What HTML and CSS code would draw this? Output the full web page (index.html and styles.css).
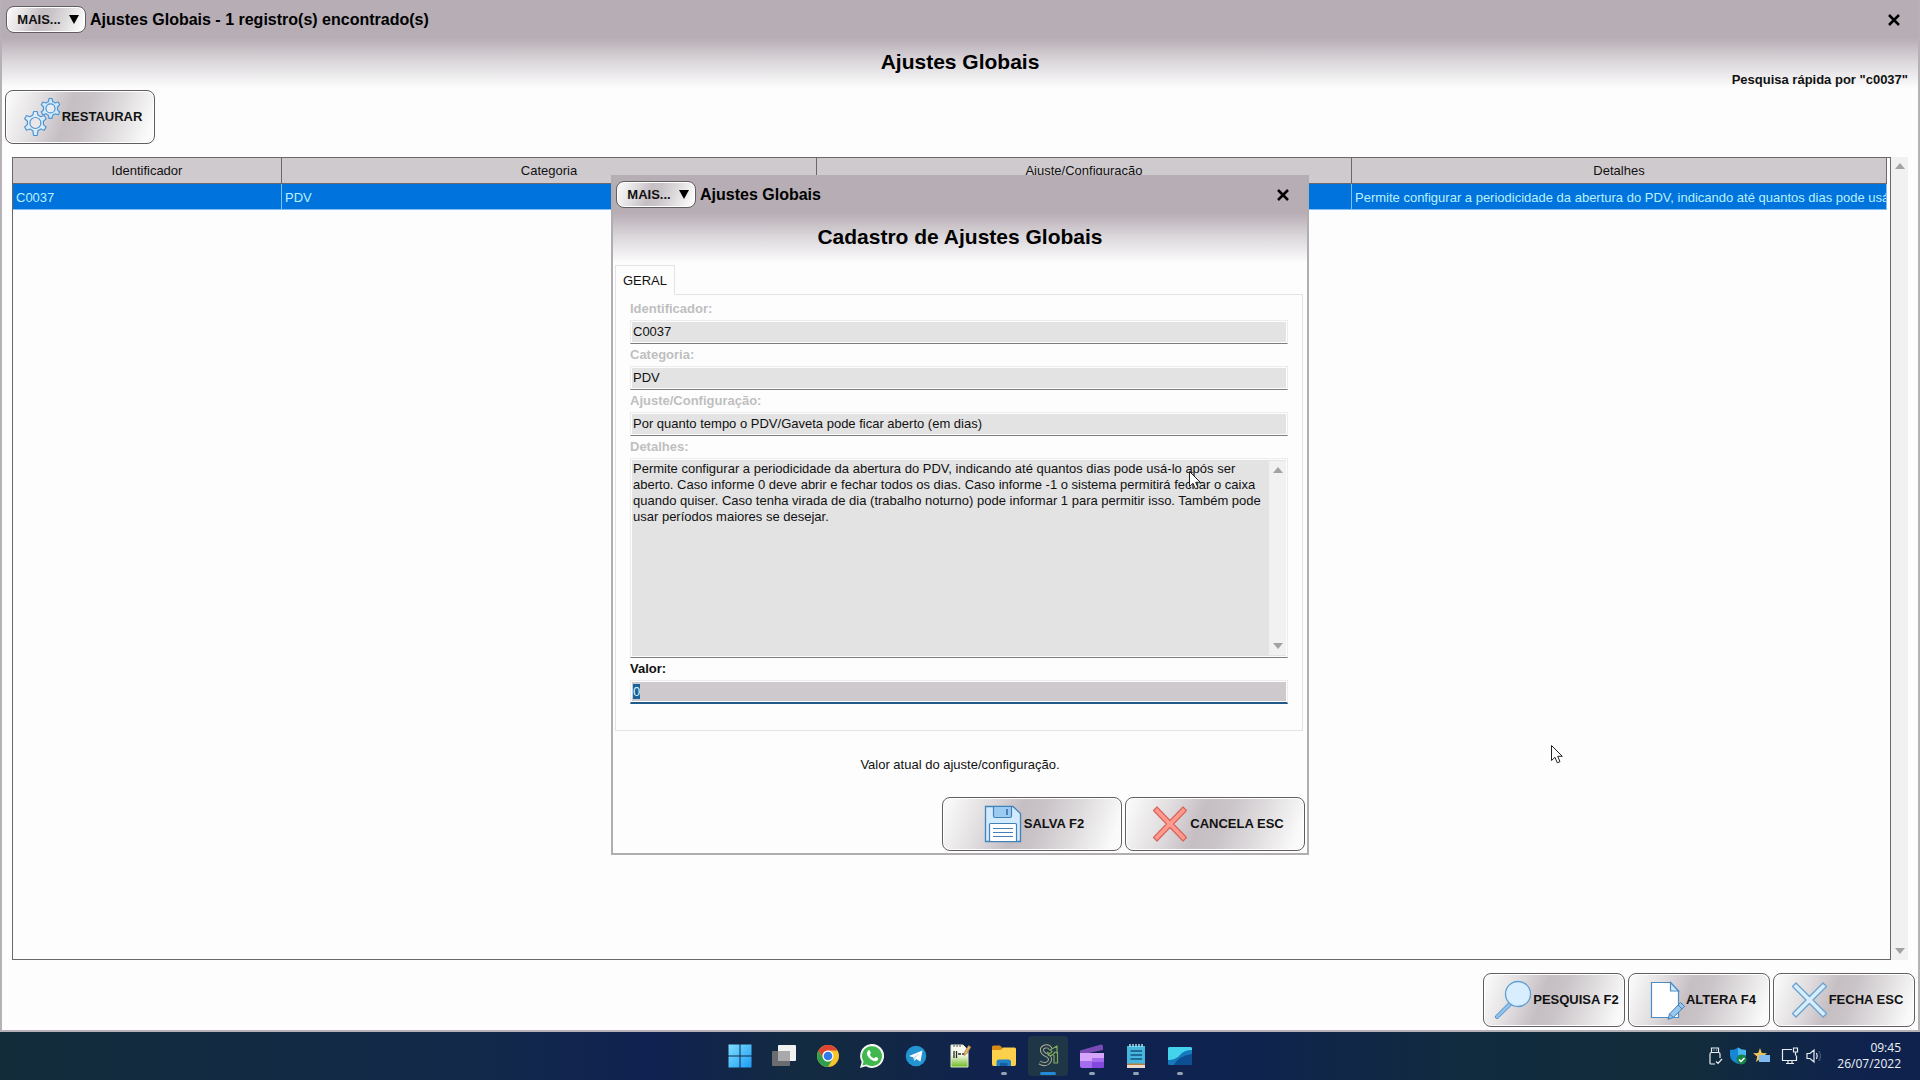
FILE: index.html
```html
<!DOCTYPE html>
<html lang="pt-BR">
<head>
  <meta charset="UTF-8">
  <meta name="viewport" content="width=device-width, initial-scale=1.0">
  <title>Ajustes Globais</title>
  <link rel="stylesheet" href="styles.css">
</head>
<body>
  <main class="window">
    <header class="titlebar">
      <button class="btn btn-menu" type="button">MAIS... <span class="caret"></span></button>
      <span class="caption">Ajustes Globais - 1 registro(s) encontrado(s)</span>
      <button class="close" type="button" aria-label="Fechar">
        <svg width="12" height="12" viewBox="0 0 12 12"><path d="M1 1L11 11M11 1L1 11"/></svg>
      </button>
    </header>
    <div class="heading">
      <h1>Ajustes Globais</h1>
      <p class="search-info">Pesquisa rápida por "c0037"</p>
    </div>

    <div class="toolbar">
      <button class="btn btn-restore" type="button">
        <svg class="icon" viewBox="0 0 40 40">
          <g fill="#cfe8fb" stroke="#4f94d0" stroke-width="1.2" stroke-linejoin="round">
            <path d="M26.500 4.500L27 1.500H30L30.700 4.500L33.200 6L36.200 5L37.700 7.700L35.500 10V12.800L37.700 15L36.200 17.700L33.200 16.800L30.700 18.300L30 21.300H27L26.300 18.300L23.800 16.800L20.800 17.700L19.300 15L21.500 12.800V10L19.300 7.700L20.800 5L23.800 6Z"/>
            <circle cx="28.500" cy="11.400" r="4.500" fill="#e6ecf2"/>
            <path d="M10.900 18L11.600 14.500H15.200L15.900 18L18.900 19.700L22.300 18.500L24.100 21.700L21.400 24.200V27.600L24.100 30L22.300 33.200L18.900 32L15.900 33.800L15.200 38.500H11.600L10.900 33.800L7.900 32L4.500 33.200L2.700 30L5.400 27.600V24.200L2.700 21.700L4.500 18.500L7.900 19.700Z" fill="#dcecf8"/>
            <circle cx="13.400" cy="26" r="5.500" fill="#e9e7ea"/>
          </g>
        </svg>
        RESTAURAR
      </button>
    </div>

    <div class="list">
      <div class="list-body">
        <table>
          <colgroup><col class="col-id"><col><col><col></colgroup>
          <thead>
            <tr><th>Identificador</th><th>Categoria</th><th>Ajuste/Configuração</th><th>Detalhes</th></tr>
          </thead>
          <tbody>
            <tr>
              <td>C0037</td>
              <td>PDV</td>
              <td>Por quanto tempo o PDV/Gaveta pode ficar aberto (em dias)</td>
              <td>Permite configurar a periodicidade da abertura do PDV, indicando até quantos dias pode usá-lo após ser aberto.</td>
            </tr>
          </tbody>
        </table>
      </div>
      <div class="scrollbar"><span class="arrow up"></span><span class="arrow down"></span></div>
    </div>

    <footer class="actions">
      <button class="btn" type="button">
        <svg class="icon" viewBox="0 0 40 40">
          <path d="M16.500 22L3 35.500Q1.500 37.500 3 38.300Q4.300 39 5.600 37.700L19 24.500Z" fill="#8fc3ee" stroke="#4c8cc4"/>
          <circle cx="25" cy="14" r="12.500" fill="#d8edfd" stroke="#5d9fd2" stroke-width="1.300"/>
        </svg>
        PESQUISA F2
      </button>
      <button class="btn" type="button">
        <svg class="icon" viewBox="0 0 40 40">
          <path d="M5.500 2.500H24.500L32.500 11V37.500H5.500Z" fill="#fff" stroke="#4c8cc4" stroke-width="1.200"/>
          <path d="M24.500 2.500V11H32.500Z" fill="#cfe8fb" stroke="#4c8cc4" stroke-width="1.200"/>
          <path d="M22 39.300L23.500 34L34.500 22.500L38.500 26.300L27.300 37.500Z" fill="#98c8ef" stroke="#3f7fb8"/>
          <path d="M23.500 34L27.300 37.500M32 25L36 28.800" stroke="#3f7fb8"/>
        </svg>
        ALTERA F4
      </button>
      <button class="btn" type="button">
        <svg class="icon" viewBox="0 0 40 40">
          <path d="M3.500 6.500L7 3L20.500 16.500L34 3L37.500 6.500L24 20L37.500 33.500L34 37L20.500 23.500L7 37L3.500 33.500L17 20Z" fill="#d8edfd" stroke="#6aa2cf" stroke-width="1.400" stroke-linejoin="round"/>
        </svg>
        FECHA ESC
      </button>
    </footer>

    <div class="overlay">
      <section class="dialog" role="dialog" aria-labelledby="dialog-title">
        <header class="titlebar">
          <button class="btn btn-menu" type="button">MAIS... <span class="caret"></span></button>
          <span class="caption">Ajustes Globais</span>
          <button class="close" type="button" aria-label="Fechar">
            <svg width="12" height="12" viewBox="0 0 12 12"><path d="M1 1L11 11M11 1L1 11"/></svg>
          </button>
        </header>
        <div class="heading">
          <h2 id="dialog-title">Cadastro de Ajustes Globais</h2>
        </div>

        <button class="tab" type="button">GERAL</button>
        <form class="panel" id="form">
          <label for="identificador">Identificador:</label>
          <input id="identificador" type="text" value="C0037" readonly>
          <label for="categoria">Categoria:</label>
          <input id="categoria" type="text" value="PDV" readonly>
          <label for="ajuste">Ajuste/Configuração:</label>
          <input id="ajuste" type="text" value="Por quanto tempo o PDV/Gaveta pode ficar aberto (em dias)" readonly>
          <label for="detalhes">Detalhes:</label>
          <div class="memo">
            <textarea id="detalhes" readonly>Permite configurar a periodicidade da abertura do PDV, indicando até quantos dias pode usá-lo após ser
aberto. Caso informe 0 deve abrir e fechar todos os dias. Caso informe -1 o sistema permitirá fechar o caixa
quando quiser. Caso tenha virada de dia (trabalho noturno) pode informar 1 para permitir isso. Também pode
usar períodos maiores se desejar.</textarea>
            <div class="scrollbar"><span class="arrow up"></span><span class="arrow down"></span></div>
          </div>
          <label class="active" for="valor">Valor:</label>
          <input class="active" id="valor" type="text" value="0">
        </form>
        <p class="hint">Valor atual do ajuste/configuração.</p>

        <div class="dialog-actions">
          <button class="btn" type="submit" form="form">
            <svg class="icon" viewBox="0 0 40 40">
              <path d="M1.500 2.500H29L36.500 9.500V37.500H1.500Z" fill="#d2eafd" stroke="#4282b8" stroke-width="1.300"/>
              <path d="M9.500 2.500H27.500V12Q27.500 13.500 26 13.500H11Q9.500 13.500 9.500 12Z" fill="#9ccbf2" stroke="#4282b8" stroke-width="1.200"/>
              <path d="M23 5V11" stroke="#2f6da4" stroke-width="1.500"/>
              <path d="M5.500 37.500V20.500Q5.500 19.500 6.500 19.500H31.500Q32.500 19.500 32.500 20.500V37.500Z" fill="#fff" stroke="#4282b8" stroke-width="1.200"/>
              <path d="M9 24.500H29M9 28.500H29M9 32.500H29" stroke="#4282b8"/>
            </svg>
            SALVA F2
          </button>
          <button class="btn" type="button">
            <svg class="icon" viewBox="0 0 40 40">
              <path d="M3.500 6.500L7 3L20 16.500L33 3L36.500 6.500L23.500 20L36.500 33.500L33 37L20 23.500L7 37L3.500 33.500L16.500 20Z" fill="#ff9a8f" stroke="#d9645c" stroke-width="1.200" stroke-linejoin="round"/>
            </svg>
            CANCELA ESC
          </button>
        </div>
      </section>
    </div>
  </main>

  <nav class="taskbar">
    <div class="apps">
      <button class="app" type="button" aria-label="Iniciar">
        <svg viewBox="0 0 24 24">
          <defs><linearGradient id="win" x1="0" y1="0" x2="1" y2="1"><stop offset="0" stop-color="#7fe0ff"/><stop offset="1" stop-color="#1c9cf5"/></linearGradient></defs>
          <path d="M.5 .5H11.500V11.500H.5ZM12.500 .5H23.500V11.500H12.500ZM.5 12.500H11.500V23.500H.5ZM12.500 12.500H23.500V23.500H12.500Z" fill="url(#win)"/>
        </svg>
      </button>
      <button class="app" type="button" aria-label="Visão de tarefas">
        <svg viewBox="0 0 24 24"><rect x="6" y="1" width="18" height="16" rx="1" fill="#f1f1f2"/><rect x="0" y="7" width="18" height="15" rx="1" fill="#6a6c70"/><path d="M6 7H18V17H6Z" fill="#a9a9ab"/></svg>
      </button>
      <button class="app" type="button" aria-label="Chrome">
        <svg viewBox="0 0 24 24">
          <circle cx="12" cy="12" r="11" fill="#f7c52b"/>
          <path d="M2.500 6.500A11 11 0 0 1 21.500 6.500H12A5.500 5.500 0 0 0 7.200 14.700Z" fill="#e04434"/>
          <path d="M2.500 6.500A11 11 0 0 0 12 23L16.700 14.800A5.500 5.500 0 0 1 7.200 14.700Z" fill="#2e9e4f"/>
          <circle cx="12" cy="12" r="5.500" fill="#fff"/><circle cx="12" cy="12" r="4.300" fill="#2f7be8"/>
        </svg>
      </button>
      <button class="app" type="button" aria-label="WhatsApp">
        <svg viewBox="0 0 24 24">
          <path d="M0 24L1.700 18A12 12 0 1 1 6 22.300Z" fill="#f4f8f4"/>
          <path d="M2.400 21.500L3.600 17.600A10 10 0 1 1 6.500 20.500Z" fill="#41b84f"/>
          <path d="M8 6.500Q9.500 5.500 10 7L10.800 9Q10.900 9.700 9.800 10.800Q11.200 13.600 14 14.600L15.300 13.200Q15.800 12.800 18 14.100Q18.700 14.600 17.500 16.500Q15 18.300 10.600 15.300Q5 10.500 8 6.500Z" fill="#fff"/>
        </svg>
      </button>
      <button class="app" type="button" aria-label="Telegram">
        <svg viewBox="0 0 24 24"><circle cx="12" cy="12" r="10.300" fill="#2393d2"/><path d="M5 12L18.500 6.500L16.400 17.800L12.400 15L10.300 17L9.500 13.600Z" fill="#fff"/><path d="M9.500 13.600L16 8.700L11 14.200L10.300 17Z" fill="#b9d8ec"/></svg>
      </button>
      <button class="app" type="button" aria-label="Notepad++">
        <svg viewBox="0 0 24 24">
          <defs><linearGradient id="npp" x1="0" y1="0" x2="0" y2="1"><stop offset=".45" stop-color="#f6f7ee"/><stop offset="1" stop-color="#6cbb1d"/></linearGradient></defs>
          <path d="M3 1H15L20 6V23H3Z" fill="url(#npp)" stroke="#dfe6cf"/>
          <path d="M5 2H13" stroke="#555" stroke-dasharray="2 1"/>
          <path d="M6 7V14M8.500 7V14M10 10H13M14 10H17" stroke="#263022" stroke-width="1.300"/>
          <path d="M16 9L20.500 1.500L23 3L18.500 10L16 11.500Z" fill="#ddb66a" stroke="#9a6b31" stroke-width=".6"/>
        </svg>
      </button>
      <button class="app running" type="button" aria-label="Explorador de Arquivos">
        <svg viewBox="0 0 24 24"><path d="M0 3Q0 1.500 1.500 1.500H8L10.500 4V8H0Z" fill="#d98a16"/><path d="M0 6H9L11 3.500H22.500Q24 3.500 24 5V20Q24 22 22.500 22H1.500Q0 22 0 20Z" fill="#fcd04b"/><path d="M4.500 22V18Q4.500 15.500 7 15.500H16.500Q19 15.500 19 18V22Z" fill="#1f7fc9"/><path d="M8 22V19H15.500V22Z" fill="#155f9f"/></svg>
      </button>
      <button class="app running current" type="button" aria-label="Sistema">
        <svg viewBox="0 0 24 24" fill="none">
          <path d="M14.500 5Q13 1.500 9 2.500Q4.500 4 6.500 8Q7.500 10 12 12Q15.500 14.500 13 18Q9.500 22 3.500 18.500" stroke="#a9b3a5" stroke-width="4"/>
          <path d="M14.500 5Q13 1.500 9 2.500Q4.500 4 6.500 8Q7.500 10 12 12Q15.500 14.500 13 18Q9.500 22 3.500 18.500" stroke="#2a3b40" stroke-width="2.200"/>
          <path d="M11 8Q14 11 16 7.500L14 6L21 2V9L19 8Q16 13 12 11M18 11V19H21.500V8" stroke="#82a85c" stroke-width="1.200"/>
        </svg>
      </button>
      <button class="app running" type="button" aria-label="Editor de vídeo">
        <svg viewBox="0 0 24 24"><path d="M0 6.500L21 .5Q22.500 0 23 2V6L4 10H0Z" fill="#7a4bb5"/><path d="M0 9H24V22Q24 24 22 24H2Q0 24 0 22Z" fill="#a66cf0"/><path d="M0 9H24V14H12V17H0Z" fill="#d5a5fb"/><path d="M12 18H24V22Q24 24 22 24H12Z" fill="#8448dc"/></svg>
      </button>
      <button class="app running" type="button" aria-label="Bloco de Notas">
        <svg viewBox="0 0 24 24"><path d="M3 2H21V20H3Z" fill="#45b6dd"/><path d="M3 20H21V24H3Z" fill="#e8ddd0"/><path d="M3 19.500H21V21H3Z" fill="#c07a38"/><path d="M6 0V3M9 0V3M12 0V3M15 0V3M18 0V3" stroke="#b9ecfb" stroke-width="1.400"/><path d="M6.500 7H18M6.500 11H18M6.500 15H18" stroke="#15547e" stroke-width="1.700"/></svg>
      </button>
      <button class="app running" type="button" aria-label="Área de trabalho remota">
        <svg viewBox="0 0 24 24"><rect y="3" width="24" height="18" rx="1.500" fill="#1779bd"/><path d="M0 16Q8 16 12 11Q16 6 24 6V4.500Q24 3 22.500 3H1.500Q0 3 0 4.500Z" fill="#43d3ec"/><path d="M6 21Q10 12 24 10V19.500Q24 21 22.500 21Z" fill="#0c4f92"/></svg>
      </button>
    </div>
    <div class="tray">
      <svg width="16" height="20" viewBox="0 0 16 20" fill="none" stroke="#e8edf2" stroke-width="1.200"><path d="M4.500 6V2H11.500V6M6.500 4H7.500M9 4H10M8 18H4Q3 18 3 17V8Q3 6.500 4.500 6.500H11.500Q13 6.500 13 8V12M9 15.500L11 17.500L15 13"/></svg>
      <svg width="18" height="20" viewBox="0 0 18 20"><path d="M1 4Q6 4 9 1.500Q12 4 17 4V9Q16 15 9 18Q1 15 1 9Z" fill="#1687d4"/><path d="M9 1.500Q12 4 17 4V9H9Z" fill="#49b7ee"/><circle cx="12.500" cy="13.500" r="5" fill="#158449"/><path d="M10 13.500L12 15.500L15.500 12" fill="none" stroke="#fff" stroke-width="1.500"/></svg>
      <svg width="18" height="20" viewBox="0 0 18 20"><path d="M7 2L8.800 7L14 7.200L10 10.500L11 16L7 13L3 16L4.200 10.500L0 7.200L5.200 7Z" fill="#eec356"/><rect x="6" y="9" width="11" height="7" fill="#7fbaf0"/></svg>
      <svg class="tray-net" width="18" height="20" viewBox="0 0 18 20" fill="none" stroke="#e8edf2" stroke-width="1.200"><path d="M11 3.500H1.500V14.500H15.500V9.500M5 17.500H13M7 14.500V17.500M11 14.500V17.500M12.500 2H16.500V6H12.500ZM14.500 6V9.500"/></svg>
      <svg width="18" height="20" viewBox="0 0 18 20" fill="none" stroke="#e8edf2" stroke-width="1.200"><path d="M2 7.500H5L9 4V16L5 12.500H2ZM11.500 7Q13 10 11.500 13"/><path d="M14 5Q17 10 14 15" stroke="#4b5878"/></svg>
      <time datetime="2022-07-26T09:45">09:45<br>26/07/2022</time>
    </div>
  </nav>

  <!-- mouse pointers -->
  <svg class="pointer pointer-a" viewBox="0 0 12 19"><path d="M.5 .5V15.500L4 12.300L6.300 17.800L9 16.700L6.700 11.300H11.300Z"/></svg>
  <svg class="pointer pointer-b" viewBox="0 0 12 19"><path d="M.5 .5V15.500L4 12.300L6.300 17.800L9 16.700L6.700 11.300H11.300Z"/></svg>

  <script>
    // foco no campo editável com o valor selecionado
    const valor = document.getElementById('valor');
    valor.focus();
    valor.select();
  </script>
</body>
</html>
```
FILE: styles.css
```css
* {
  box-sizing: border-box;
}
body {
  margin: 0;
  height: 100vh;
  display: flex;
  flex-direction: column;
  overflow: hidden;
  font: 13px/16px "Liberation Sans", Arial, sans-serif;
  color: #111;
}
button, input, textarea {
  font: inherit;
  color: inherit;
}
h1, h2, p {
  margin: 0;
}

/* window */
.window {
  position: relative;
  flex: 1;
  min-height: 0;
  display: flex;
  flex-direction: column;
  background: #fdfdfd;
  border: 2px solid #b5b1b6;
  border-top: 0;
}
.titlebar {
  display: flex;
  align-items: center;
  gap: 4px;
  height: 38px;
  padding: 1px 18px 0 4px;
  background: #b6adb5;
}
.caption {
  flex: 1;
  font-size: 16px;
  font-weight: bold;
  color: #000;
}
.close {
  display: flex;
  padding: 0;
  border: 0;
  background: none;
}
.close path {
  stroke: #000;
  stroke-width: 2.5;
}
.heading {
  display: grid;
  justify-items: center;
  height: 50px;
  padding: 0 10px;
  background: linear-gradient(#b8adb5, #d9d5d9 45%, #fdfdfd);
}
.heading h1, .heading h2 {
  grid-area: 1 / 1;
  font-size: 21px;
  line-height: 48px;
  color: #000;
}
.search-info {
  grid-area: 1 / 1;
  justify-self: end;
  align-self: end;
  font-weight: bold;
}

/* buttons */
.btn {
  display: flex;
  align-items: center;
  justify-content: center;
  width: 142px;
  height: 54px;
  padding: 0 0 0 4px;
  border: 1px solid #625d61;
  border-radius: 8px;
  box-shadow: inset 0 0 0 1px #fff;
  background: linear-gradient(110deg, #f8f8f8 4%, #e3e0e2 22%, #c5bec3 42%, #cac4c8 54%, #dedbdd 72%, #fafafa 94%);
  font-weight: bold;
  white-space: nowrap;
}
.btn-menu {
  width: 80px;
  height: 27px;
  gap: 8px;
}
.caret {
  border: 5px solid transparent;
  border-top: 9px solid #000;
  border-bottom: 0;
}
.btn-restore {
  width: 150px;
}
.icon {
  width: 40px;
  height: 40px;
  flex: none;
  fill: none;
}
.toolbar {
  padding: 2px 3px 13px;
}
.actions, .dialog-actions {
  display: flex;
  justify-content: flex-end;
  gap: 3px;
}
.actions {
  padding: 13px 3px 3px;
}

/* record list */
.list {
  flex: 1;
  display: flex;
  margin: 0 10px;
}
.list-body {
  flex: 1;
  min-width: 0;
  padding-right: 3px;
  border: 1px solid #6b676a;
}
table {
  width: 100%;
  table-layout: fixed;
  border-collapse: separate;
  border-spacing: 0;
}
.col-id {
  width: 269px;
}
th, td {
  height: 26px;
  padding: 0 3px;
  overflow: hidden;
  white-space: nowrap;
}
th {
  border-right: 1px solid #6b676a;
  border-bottom: 1px solid #6b676a;
  background: #cfcace;
  font-weight: normal;
}
td {
  padding-top: 2px;
  border-right: 1px solid #7fc0f5;
  border-bottom: 1px solid #7fc0f5;
  background: #0073dc;
  color: #b9f1ff;
}
.scrollbar {
  display: flex;
  flex-direction: column;
  justify-content: space-between;
  align-items: center;
  width: 17px;
  padding: 6px 0;
  background: #f1f1f1;
}
.arrow {
  border: 5px solid transparent;
}
.up {
  border-top: 0;
  border-bottom: 6px solid #a3a3a3;
}
.down {
  border-bottom: 0;
  border-top: 6px solid #a3a3a3;
}

/* dialog */
.overlay {
  position: absolute;
  inset: 0;
  display: flex;
  align-items: center;
  justify-content: center;
}
.dialog {
  width: 698px;
  background: #fdfdfd;
  border: 2px solid #b1aeb1;
  border-top: 0;
}
.dialog .titlebar {
  padding-left: 3px;
}
.tab {
  display: block;
  position: relative;
  width: 60px;
  height: 30px;
  margin: 2px 0 -1px 2px;
  padding: 0;
  border: 1px solid #e3e3e3;
  border-bottom: 0;
  background: #fdfdfd;
  text-align: center;
}
.panel {
  display: flex;
  flex-direction: column;
  margin: 0 4px 0 2px;
  padding: 3px 14px 26px;
  border: 1px solid #e3e3e3;
}
.panel label {
  font-weight: bold;
  line-height: 22px;
  color: #bfbfbf;
}
.panel input, .memo {
  border: 1px solid #ececec;
  border-bottom-color: #7c7c7c;
  outline: 0;
  background: #e3e3e3;
  box-shadow: inset 0 0 0 1px #fdfdfd;
}
.panel input {
  height: 24px;
  padding: 0 2px 1px;
}
.memo {
  display: flex;
  height: 200px;
  padding: 2px 1px;
}
.memo textarea {
  flex: 1;
  min-width: 0;
  padding: 0 1px;
  border: 0;
  outline: 0;
  resize: none;
  overflow: hidden;
  background: none;
}
.panel label.active {
  color: #111;
}
.panel input.active {
  background: #cec9cc;
  border-bottom: 2px solid #1f5a8a;
}
.active::selection {
  background: #1b6499;
  color: #d8f4ff;
}
.hint {
  padding: 26px 0 24px;
  text-align: center;
}
.dialog-actions {
  padding: 0 2px 2px;
}
.dialog-actions .btn {
  width: 180px;
}

/* taskbar */
.taskbar {
  display: grid;
  grid-template-columns: 1fr auto 1fr;
  height: 48px;
  background: linear-gradient(90deg, #122c3a, #12294a 25%, #102251 34%, #132b40 42%, #10224e 52%, #0f2350 64%, #112b3f 76%, #122c3b 88%, #0f224e 97%);
}
.apps {
  grid-column: 2;
  display: flex;
  align-items: center;
  gap: 4px;
}
.app {
  position: relative;
  width: 40px;
  height: 40px;
  padding: 8px;
  border: 0;
  border-radius: 4px;
  background: none;
}
.app svg {
  display: block;
  width: 24px;
  height: 24px;
}
.running::after {
  content: "";
  position: absolute;
  bottom: 1px;
  left: 17px;
  width: 6px;
  height: 3px;
  border-radius: 2px;
  background: #94a3b3;
}
.current {
  background: #1f3646;
}
.current::after {
  left: 12px;
  width: 16px;
  background: #2489d6;
}
.tray {
  display: flex;
  align-items: center;
  justify-content: flex-end;
  gap: 6px;
  padding-right: 19px;
  color: #eef2f7;
  font: 12px/16px "Open Sans", "Noto Sans", sans-serif;
  text-align: right;
}
.tray-net {
  margin-left: 4px;
}
.tray time {
  margin-left: 8px;
}

.pointer {
  position: absolute;
  width: 12px;
  height: 19px;
  fill: #fff;
  stroke: #222;
}
.pointer-a {
  left: 1189px;
  top: 471px;
}
.pointer-b {
  left: 1551px;
  top: 745px;
}
```
